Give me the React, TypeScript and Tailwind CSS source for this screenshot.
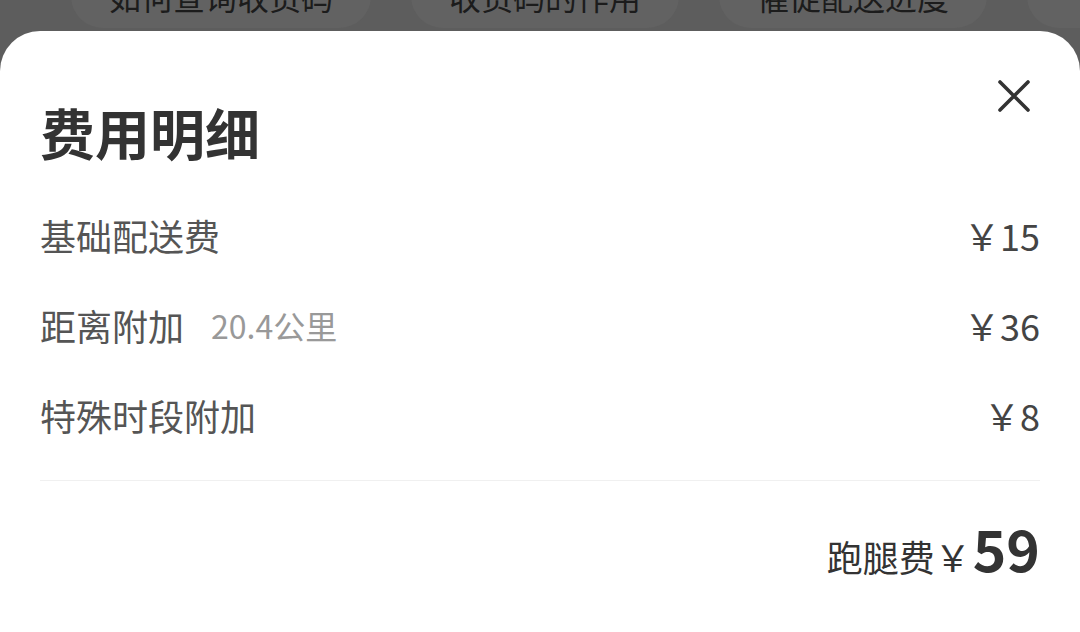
import React from 'react';

const font = { fontFamily: '"Noto Sans CJK SC", "Noto Sans", sans-serif' };

const shortcuts = ['如何查询收货码', '收货码的作用', '催促配送进度'];

const items = [
  { label: '基础配送费', note: '', amount: '15' },
  { label: '距离附加', note: '20.4公里', amount: '36' },
  { label: '特殊时段附加', note: '', amount: '8' },
];

function CloseIcon() {
  return (
    <svg className="w-[34px] h-[34px]" viewBox="0 0 34 34" fill="none" stroke="#333" strokeWidth={3.6} strokeLinecap="round">
      <path d="M3 3L31 31M31 3L3 31" />
    </svg>
  );
}

export default function App() {
  return (
    <div className="w-[1080px] h-[632px] bg-[#5d5d5d] flex flex-col overflow-hidden" style={font}>
      {/* dimmed page behind the sheet */}
      <div className="h-[31px] shrink-0 overflow-hidden flex items-end pb-[3px] pl-[71px] gap-[40px]">
        {shortcuts.map(s => (
          <div
            key={s}
            className="shrink-0 h-[64px] px-[38px] rounded-full bg-[#626262] flex items-center text-[32px] leading-none text-[#1c1c1c] whitespace-nowrap"
          >
            {s}
          </div>
        ))}
        <div className="shrink-0 w-[200px] h-[64px] rounded-full bg-[#626262]" />
      </div>

      {/* bottom sheet */}
      <div className="relative flex-1 bg-white rounded-t-[40px] px-10 pt-[73px] flex flex-col">
        <button className="absolute top-[48px] right-[49px]">
          <CloseIcon />
        </button>

        <h2 className="text-[55px] leading-none font-bold text-[#333]">费用明细</h2>

        <div className="mt-[31px] flex flex-col">
          {items.map(it => (
            <div key={it.label} className="h-[90px] flex items-center justify-between">
              <div className="flex items-center">
                <span className="text-[36px] text-[#555]">{it.label}</span>
                {it.note && <span className="ml-[27px] text-[32px] text-[#999]">{it.note}</span>}
              </div>
              <span className="text-[36px] text-[#444]">￥{it.amount}</span>
            </div>
          ))}
        </div>

        <div className="mt-[20px] h-px bg-[#f0f0f0]" />

        <div className="mt-[38px] flex items-baseline justify-end text-[#333]">
          <span className="text-[36px] text-[#333]">跑腿费￥</span>
          <span className="ml-[2px] text-[57px] leading-none font-bold">59</span>
        </div>
      </div>
    </div>
  );
}
